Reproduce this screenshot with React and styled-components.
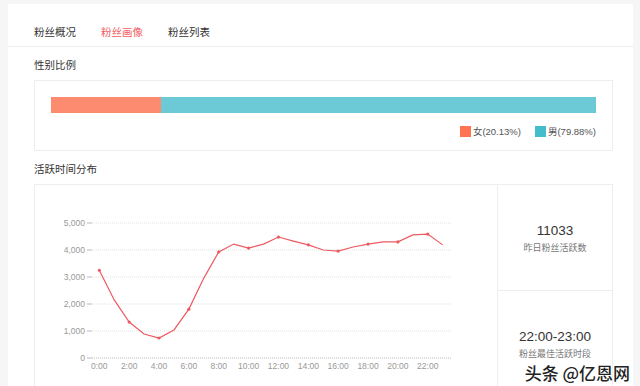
import styled, { createGlobalStyle } from "styled-components";

const active = [
  3250, 2150, 1330, 890, 740, 1040, 1810, 2960, 3930, 4220, 4070, 4220, 4480,
  4330, 4190, 4000, 3960, 4110, 4220, 4300, 4300, 4560, 4590, 4190,
];

const GlobalStyle = createGlobalStyle`
  body {
    margin: 0;
    background: #f6f6f6;
    font-family: "Liberation Sans", "Noto Sans CJK SC", sans-serif;
    color: #333;
  }
`;

const Panel = styled.div`
  position: relative;
  background: #fff;
  margin: 4px 7px 0 8px;
  height: 382px;
  overflow: hidden;
`;

const Tabs = styled.div`
  display: flex;
  gap: 25px;
  height: 43px;
  box-sizing: border-box;
  padding: 21px 26px 0;
  border-bottom: 1px solid #eeeeee;
`;

const Tab = styled.div`
  font-size: 10.5px;
  line-height: 14px;
  color: ${(p) => (p.$active ? "#f25c5f" : "#333")};
`;

const Content = styled.div`
  padding: 0 20px 0 26px;
`;

const Title = styled.div`
  font-size: 10.5px;
  line-height: 14px;
  margin: 11px 0 8px;
  color: #333;
`;

const Box = styled.div`
  border: 1px solid #eeeeee;
`;

const GenderBox = styled(Box)`
  padding: 16px 16px 13px;
`;

const Bar = styled.div`
  display: flex;
  height: 16px;
`;

const Segment = styled.div`
  background: ${(p) => p.$color};
`;

const Legend = styled.div`
  display: flex;
  justify-content: flex-end;
  gap: 14px;
  margin-top: 13px;
`;

const LegendItem = styled.div`
  display: flex;
  align-items: center;
  gap: 2px;
  font-size: 9.5px;
  line-height: 11px;
  color: #555;
`;

const Swatch = styled.span`
  width: 11px;
  height: 11px;
  background: ${(p) => p.$color};
`;

const ChartBox = styled(Box)`
  display: flex;
  height: 211px;
`;

const ChartArea = styled.div`
  width: 462px;
  border-right: 1px solid #eeeeee;
`;

const Stats = styled.div`
  flex: 1;
  display: flex;
  flex-direction: column;
`;

const StatCell = styled.div`
  flex: 1;
  display: flex;
  flex-direction: column;
  align-items: center;
  justify-content: center;
  gap: 3px;
  & + & {
    border-top: 1px solid #eeeeee;
  }
`;

const StatValue = styled.div`
  font-size: 13.5px;
  line-height: 17px;
  color: #333;
`;

const StatLabel = styled.div`
  font-size: 9px;
  line-height: 12px;
  color: #777;
`;

const Watermark = styled.div`
  position: absolute;
  right: 3px;
  bottom: 3px;
  font-family: "Noto Sans CJK SC", sans-serif;
  font-size: 17px;
  line-height: 20px;
  font-weight: 500;
  color: #222;
  text-shadow: 0 0 2px #fff, 0 0 2px #fff, 0 0 3px #fff;
`;

function ActivityChart() {
  const x = (h) => 64.3 + 14.93 * h;
  const y = (v) => 173 - (v / 1000) * 27;
  const points = active.map((v, h) => `${x(h)},${y(v)}`).join(" ");
  const levels = [0, 1000, 2000, 3000, 4000, 5000];
  return (
    <svg width="462" height="209" style={{ display: "block" }}>
      {levels.map((v) => (
        <g key={v}>
          <line
            x1="57"
            x2="417"
            y1={y(v)}
            y2={y(v)}
            stroke={v === 0 ? "#bbb" : "#e2e2e2"}
            strokeDasharray="1 1"
          />
          <line x1="52" x2="57" y1={y(v)} y2={y(v)} stroke="#bbb" />
          <text
            x="50"
            y={y(v) + 3}
            textAnchor="end"
            fontSize="8.5"
            fill="#999"
            fontFamily="Liberation Sans"
          >
            {v.toLocaleString("en-US")}
          </text>
        </g>
      ))}
      {active.map((_, h) =>
        h % 2 === 0 ? (
          <text
            key={h}
            x={x(h)}
            y="184"
            textAnchor="middle"
            fontSize="8.5"
            fill="#999"
            fontFamily="Liberation Sans"
          >
            {h}:00
          </text>
        ) : null
      )}
      <polyline points={points} fill="none" stroke="#ec5a62" strokeWidth="1.2" />
      {active.map((v, h) =>
        h % 2 === 0 ? (
          <circle key={h} cx={x(h)} cy={y(v)} r="1.6" fill="#ec5a62" />
        ) : null
      )}
    </svg>
  );
}

export default function App() {
  return (
    <>
      <GlobalStyle />
      <Panel>
        <Tabs>
          <Tab>粉丝概况</Tab>
          <Tab $active>粉丝画像</Tab>
          <Tab>粉丝列表</Tab>
        </Tabs>
        <Content>
          <Title>性别比例</Title>
          <GenderBox>
            <Bar>
              <Segment $color="#fd8b70" style={{ width: "20.13%" }} />
              <Segment $color="#6bcad5" style={{ width: "79.87%" }} />
            </Bar>
            <Legend>
              <LegendItem>
                <Swatch $color="#ff7353" />
                女(20.13%)
              </LegendItem>
              <LegendItem>
                <Swatch $color="#44bccc" />
                男(79.88%)
              </LegendItem>
            </Legend>
          </GenderBox>
          <Title>活跃时间分布</Title>
          <ChartBox>
            <ChartArea>
              <ActivityChart />
            </ChartArea>
            <Stats>
              <StatCell>
                <StatValue>11033</StatValue>
                <StatLabel>昨日粉丝活跃数</StatLabel>
              </StatCell>
              <StatCell>
                <StatValue>22:00-23:00</StatValue>
                <StatLabel>粉丝最佳活跃时段</StatLabel>
              </StatCell>
            </Stats>
          </ChartBox>
        </Content>
        <Watermark>头条 @亿恩网</Watermark>
      </Panel>
    </>
  );
}
